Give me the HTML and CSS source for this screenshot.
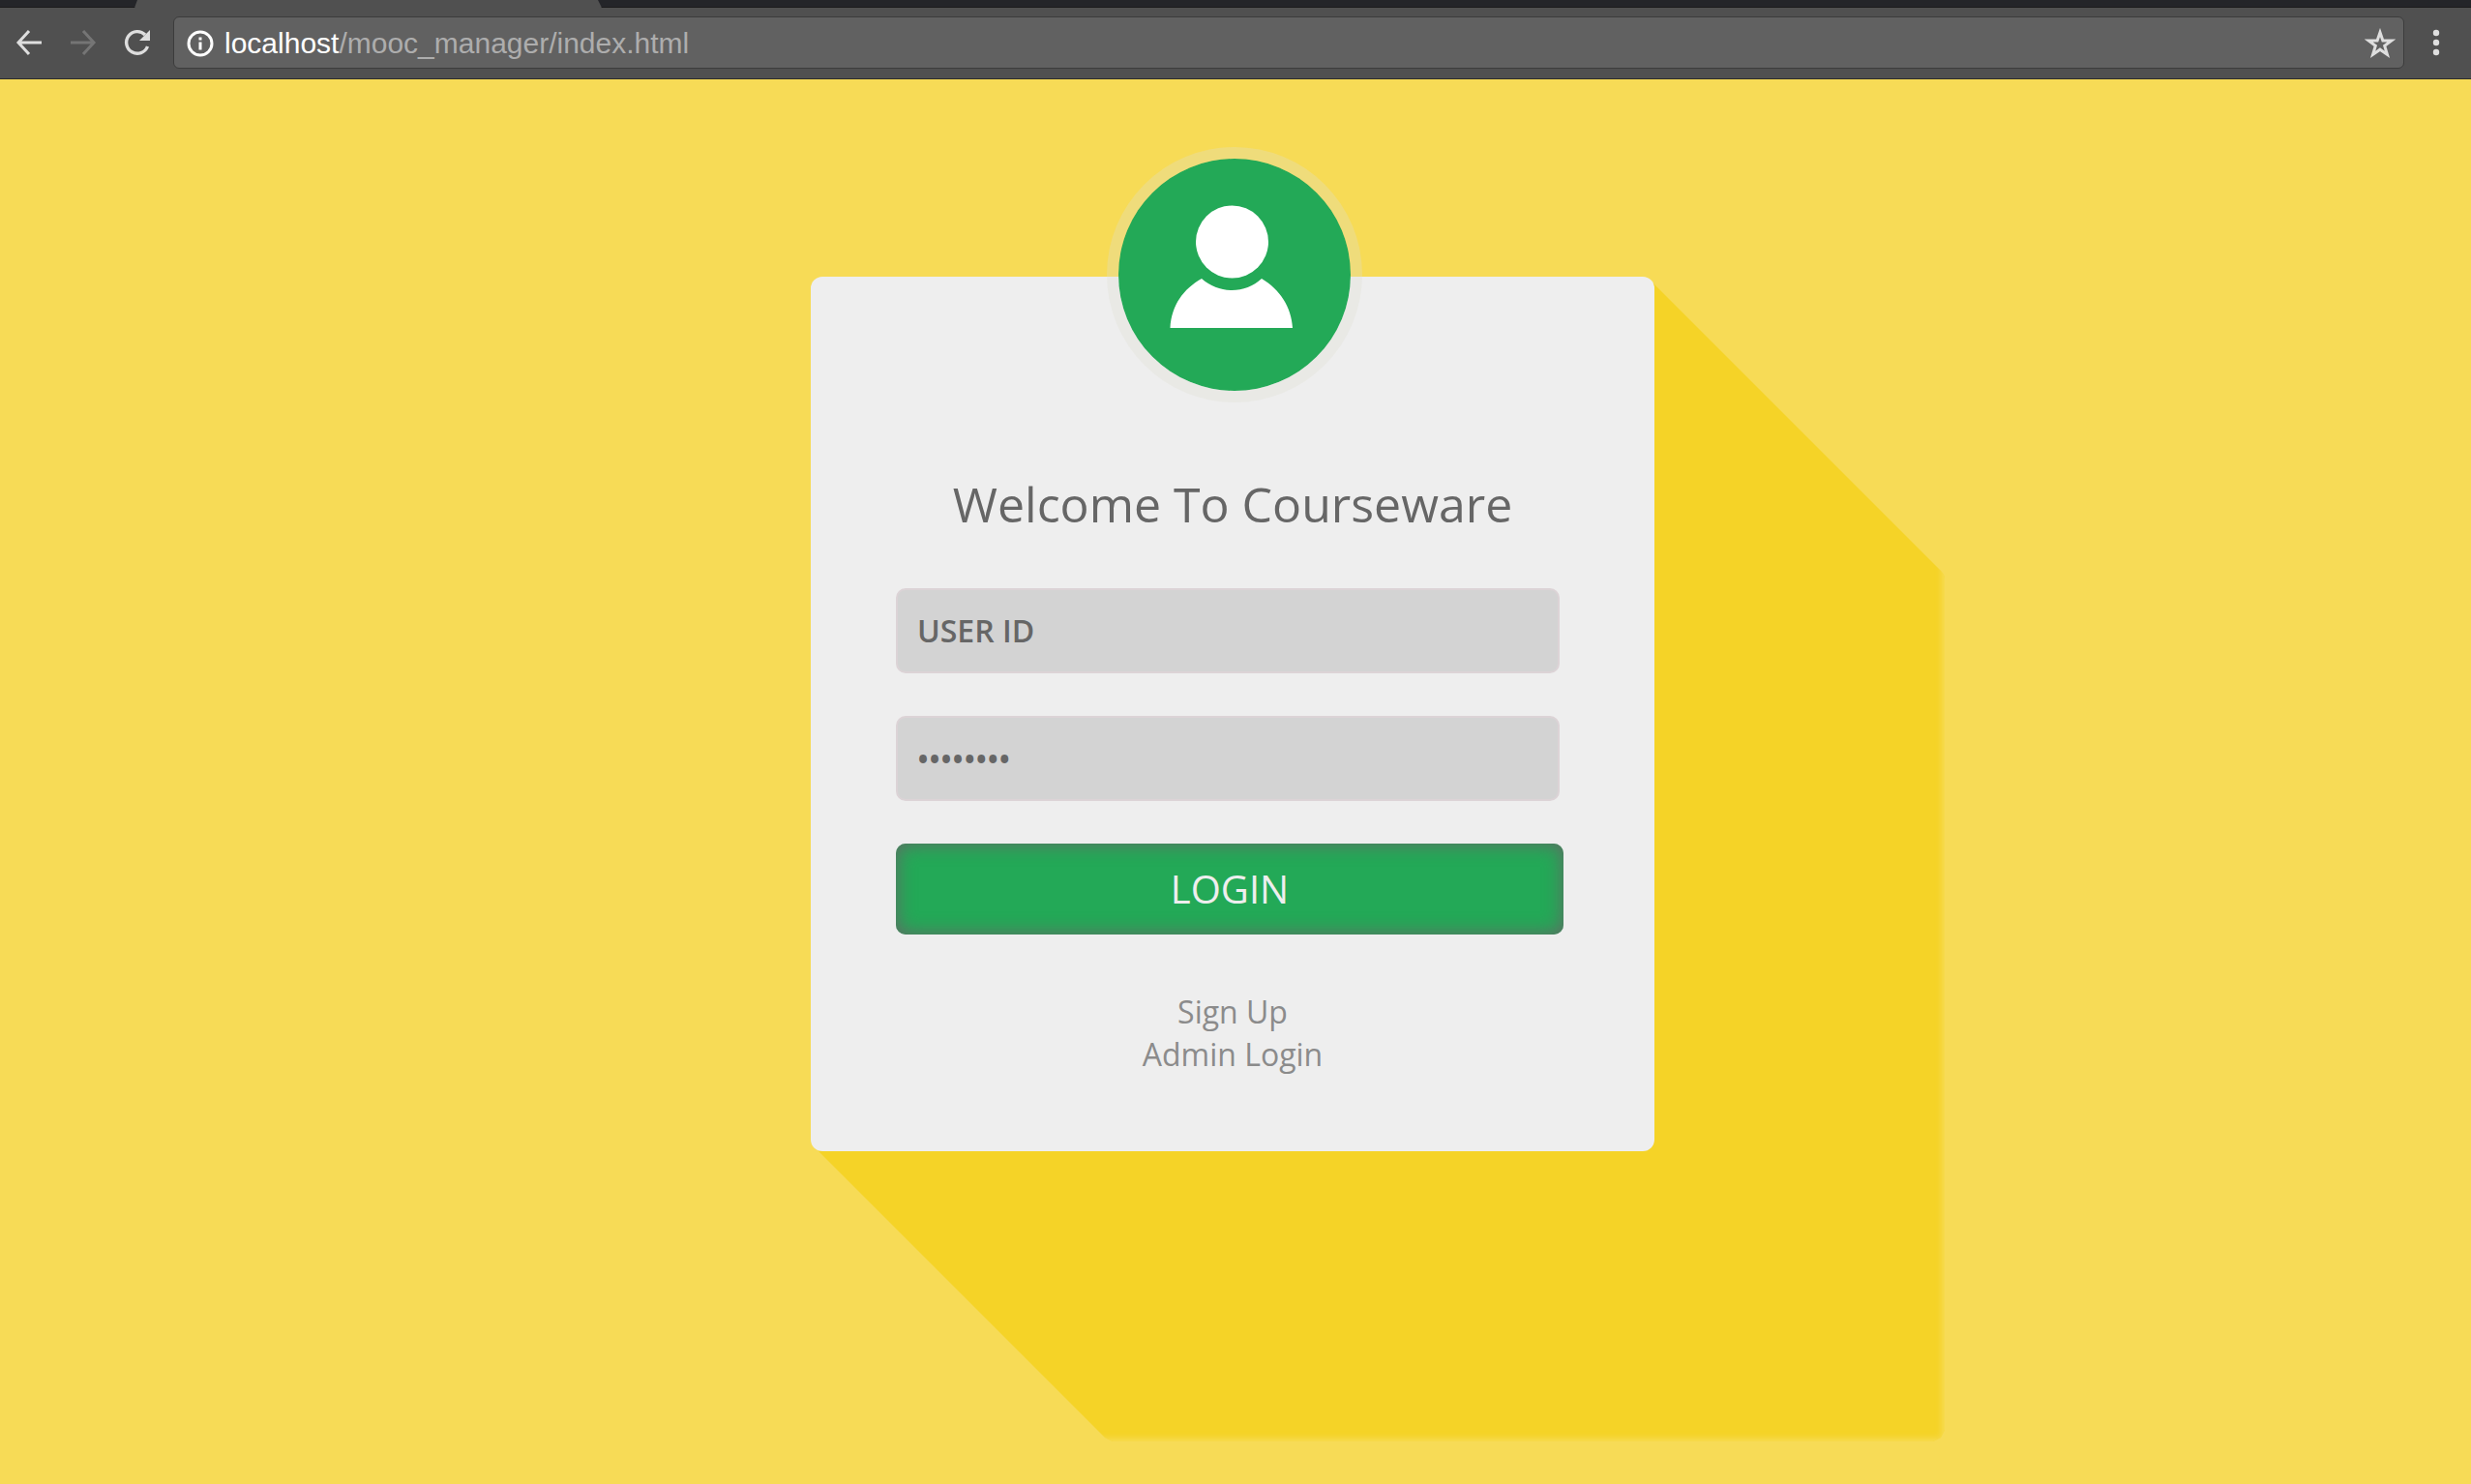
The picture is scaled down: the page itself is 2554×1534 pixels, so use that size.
FILE: index.html
```html
<!DOCTYPE html>
<html lang="en">
<head>
<meta charset="utf-8">
<title>Courseware</title>
<link rel="stylesheet" href="styles.css">
</head>
<body>
<header class="browser">
  <div class="tabstrip"><span class="tab-before"></span><span class="tab-after"></span></div>
  <div class="toolbar">
    <div class="nav">
      <button class="icon-btn" type="button" aria-label="Back"><svg width="30" height="30" viewBox="0 0 30 30" fill="none" stroke="#dedede" stroke-width="3"><path d="M28 15H4M15 3L4 15l11 12"/></svg></button>
      <button class="icon-btn" type="button" aria-label="Forward"><svg width="30" height="30" viewBox="0 0 30 30" fill="none" stroke="#757575" stroke-width="3"><path d="M2 15h24M15 3l11 12-11 12"/></svg></button>
      <button class="icon-btn" type="button" aria-label="Reload"><svg width="30" height="30" viewBox="0 0 30 30"><path d="M25.500 19A11.300 11.300 0 1 1 23 7" fill="none" stroke="#dedede" stroke-width="3.400"/><path d="M28 2v11H17z" fill="#dedede"/></svg></button>
    </div>
    <div class="address">
      <svg width="30" height="30" viewBox="0 0 30 30"><circle cx="15" cy="15" r="12" fill="none" stroke="#fff" stroke-width="3"/><path d="M13.500 8.500h3v3h-3zM13.500 13.500h3v8h-3z" fill="#fff"/></svg>
      <p class="url"><span class="host">localhost</span>/mooc_manager/index.html</p>
      <button class="icon-btn" type="button" aria-label="Bookmark"><svg width="32" height="32" viewBox="0 0 32 32"><path d="M16 4.500l2.900 8.500h9l-7.200 5.400 2.700 9L16 22.200l-7.400 5.200 2.700-9L4.100 13h9z" fill="none" stroke="#dedede" stroke-width="3"/></svg></button>
    </div>
    <button class="icon-btn" type="button" aria-label="Menu"><svg width="30" height="30" viewBox="0 0 30 30" fill="#dedede"><circle cx="15" cy="5" r="3.200"/><circle cx="15" cy="15" r="3.200"/><circle cx="15" cy="25" r="3.200"/></svg></button>
  </div>
</header>
<main class="page">
  <section class="card">
    <div class="avatar">
      <svg width="240" height="240" viewBox="0 0 240 240" fill="#fff"><circle cx="117.500" cy="86" r="37.500"/><path d="M53.500 175C55 151 67 135 86 124C104 140 131 140 148 124C167 135 179 154 180 175Z"/></svg>
    </div>
    <h1 class="title">Welcome To Courseware</h1>
    <form class="login">
      <input class="field" type="text" value="USER ID" aria-label="User ID">
      <input class="field" type="password" value="password" aria-label="Password">
      <button class="submit" type="submit">LOGIN</button>
    </form>
    <nav class="links">
      <a href="#signup">Sign Up</a>
      <a href="#admin">Admin Login</a>
    </nav>
  </section>
</main>
</body>
</html>
```
FILE: styles.css
```css
* { box-sizing: border-box; }

body {
  margin: 0;
  min-height: 100vh;
  display: flex;
  flex-direction: column;
  background: #f7db56;
  font-family: "Open Sans", sans-serif;
}

svg { display: block; }

/* Browser chrome */
.browser {
  background: #505050;
  border-bottom: 1px solid #2c2c2c;
}

.tabstrip {
  display: flex;
  justify-content: space-between;
  gap: 476px;
  height: 8px;
}

.tab-before,
.tab-after {
  background: #242529;
  border-bottom: 1px solid #1c1c1c;
}

.tab-before {
  width: 142px;
  clip-path: polygon(0 0, 100% 0, calc(100% - 3px) 100%, 0 100%);
}

.tab-after {
  flex: 1;
  clip-path: polygon(0 0, 100% 0, 100% 100%, 4px 100%);
}

.toolbar {
  display: flex;
  align-items: center;
  gap: 18px;
  padding: 9px 21px 10px 15px;
}

.nav {
  display: flex;
  gap: 26px;
  padding-right: 4px;
}

.icon-btn {
  padding: 0;
  border: 0;
  background: none;
}

.address {
  flex: 1;
  display: flex;
  align-items: center;
  gap: 10px;
  height: 54px;
  padding: 2px 8px 0 12px;
  border: 1px solid #3c3c3c;
  border-radius: 6px;
  background: #616161;
}

.url {
  flex: 1;
  margin: 0;
  color: #adadad;
  font: 30px/36px "Liberation Sans", sans-serif;
}

.host { color: #fff; }

/* Login page */
.page {
  flex: 1;
  display: flex;
  justify-content: center;
  align-items: flex-start;
  padding: 204px 6px 0 0;
  isolation: isolate;
}

.card {
  position: relative;
  width: 872px;
  padding-bottom: 78px;
  border-radius: 12px;
  background: #eee;
}

/* Long 45-degree shadow, 300px deep */
.card::before {
  content: "";
  position: absolute;
  z-index: -1;
  inset: 0 -300px -300px 0;
  background: #f5d327;
  box-shadow: inset -3px -3px 6px #f7db56;
  clip-path: polygon(
    4px 4px,
    calc(100% - 304px) 4px,
    calc(100% - 4px) 304px,
    calc(100% - 1px) 308px,
    100% 312px,
    100% calc(100% - 12px),
    calc(100% - 4px) calc(100% - 4px),
    calc(100% - 12px) 100%,
    312px 100%,
    304px calc(100% - 4px),
    4px calc(100% - 304px)
  );
}

.avatar {
  width: 264px;
  height: 264px;
  margin: -134px 0 0 306px;
  border: 12px solid rgba(221, 221, 209, 0.3);
  border-radius: 50%;
  background: #23a957;
  background-clip: padding-box;
}

.title {
  margin: 70px 0 52px;
  color: #666;
  font-size: 50px;
  font-weight: 400;
  line-height: 70px;
  text-align: center;
}

.login {
  display: grid;
  gap: 44px;
  padding: 0 94px 0 88px;
}

.field {
  height: 88px;
  margin: 0 4px 0 0;
  padding: 0 20px 2px;
  border: 2px solid #dcd3d6;
  border-radius: 10px;
  background: #d3d3d3;
  color: #666;
  font: 600 32px "Open Sans", sans-serif;
}

.submit {
  height: 94px;
  padding: 0 0 2px;
  border: 0;
  border-radius: 10px;
  background: #23a957;
  box-shadow: inset 0 0 20px #666;
  color: #eee;
  font: 40px "Open Sans", sans-serif;
}

.links {
  display: flex;
  flex-direction: column;
  align-items: center;
  margin-top: 58px;
}

.links a {
  color: #8b8b8b;
  font-size: 32px;
  line-height: 44px;
  text-decoration: none;
}
```
